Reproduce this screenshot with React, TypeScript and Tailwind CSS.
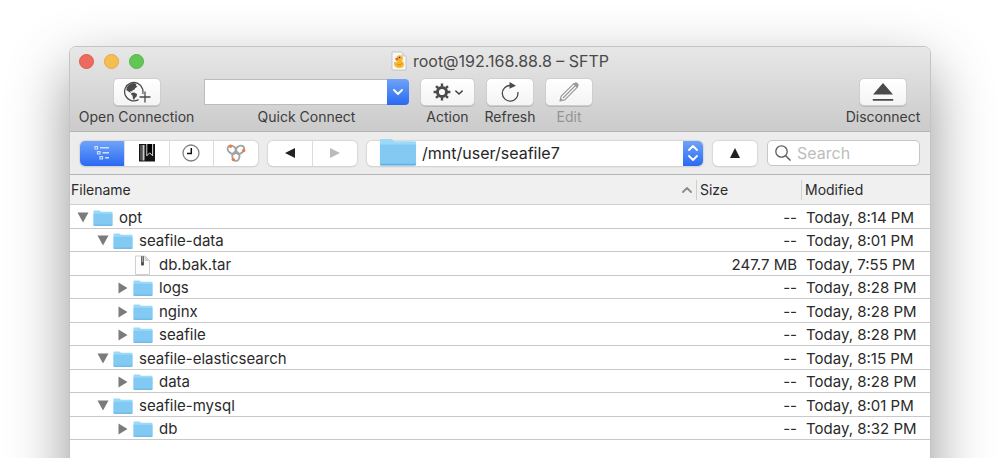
import React, { useState } from 'react';
import clsx from 'clsx';

type Entry = {
  name: string;
  depth: number;
  kind: 'open' | 'closed' | 'file';
  size: string;
  modified: string;
};

const entries: Entry[] = [
  { name: 'opt', depth: 0, kind: 'open', size: '--', modified: 'Today, 8:14 PM' },
  { name: 'seafile-data', depth: 1, kind: 'open', size: '--', modified: 'Today, 8:01 PM' },
  { name: 'db.bak.tar', depth: 2, kind: 'file', size: '247.7 MB', modified: 'Today, 7:55 PM' },
  { name: 'logs', depth: 2, kind: 'closed', size: '--', modified: 'Today, 8:28 PM' },
  { name: 'nginx', depth: 2, kind: 'closed', size: '--', modified: 'Today, 8:28 PM' },
  { name: 'seafile', depth: 2, kind: 'closed', size: '--', modified: 'Today, 8:28 PM' },
  { name: 'seafile-elasticsearch', depth: 1, kind: 'open', size: '--', modified: 'Today, 8:15 PM' },
  { name: 'data', depth: 2, kind: 'closed', size: '--', modified: 'Today, 8:28 PM' },
  { name: 'seafile-mysql', depth: 1, kind: 'open', size: '--', modified: 'Today, 8:01 PM' },
  { name: 'db', depth: 2, kind: 'closed', size: '--', modified: 'Today, 8:32 PM' },
];

const indents = ['pl-[7px]', 'pl-[27px]', 'pl-[47px]'];

const FolderIcon = ({ className }: { className: string }) => (
  <svg viewBox="0 0 40 30" preserveAspectRatio="none" className={className} aria-hidden="true">
    <path d="M1 2.500Q1 1 2.500 1H13l3 2.500h21.500Q39 3.500 39 5v23H1z" fill="#9adaf8" />
    <path d="M1 7h38v21q0 1.500-1.500 1.500h-35Q1 29.500 1 28z" fill="#82c9f3" />
    <path d="M1 27.500h38v.5q0 1.500-1.500 1.500h-35Q1 29.500 1 28z" fill="#69b2dd" />
  </svg>
);

const ArchiveIcon = () => (
  <svg viewBox="0 0 20 20" className="h-5 w-5" aria-hidden="true">
    <path d="M2.500 1h9.500l4.500 4.500v14h-14z" fill="#fdfdfd" stroke="#c4c4c4" strokeWidth="0.800" />
    <path d="M12 1v4.500h4.500z" fill="#dcdcdc" stroke="#bdbdbd" strokeWidth="0.600" />
    <rect x="8" y="1" width="3" height="9.500" rx="0.600" fill="#6a6a6a" />
    <path d="M9.500 1.500v6" stroke="#dedede" strokeWidth="1" strokeDasharray="1 1" />
    <rect x="8.700" y="7.500" width="1.600" height="2.500" fill="#3f3f3f" />
  </svg>
);

const DuckIcon = () => (
  <svg viewBox="0 0 16 20" className="h-5 w-4" aria-hidden="true">
    <path d="M1 1h9.500L15 5.500v13.500H1z" fill="#f8f8f8" stroke="#bbb" strokeWidth="0.800" />
    <path d="M10.500 1v4.500H15z" fill="#d4d4d4" />
    <path
      d="M8.500 4.300c2 0 3.500 1.500 3.500 3.300 0 1-.4 1.700-1 2.300 1.200.8 2 2.100 2 3.500 0 2.200-2 3.600-4.800 3.600-3 0-5.200-1.500-5.200-4.200 0-.9.300-1.700.8-2.300.6.7 1.500 1 2.500.8-.8-.8-1.300-2-1.300-3.200 0-2.100 1.500-3.800 3.500-3.800z"
      fill="#f5b62f"
    />
    <path d="M4 7.600l3-.8.6 1.600-2.600 1z" fill="#e0651f" />
    <circle cx="8.600" cy="6.500" r="0.800" fill="#333" />
    <path d="M6 13c1.500 1.400 3.800 1 5-.8" fill="none" stroke="#d58b16" strokeWidth="1" />
  </svg>
);

const GlobePlusIcon = () => (
  <svg viewBox="0 0 28 22" className="h-[22px] w-7" aria-hidden="true">
    <path d="M19.600 8A9.200 9.200 0 1 0 15.500 18.600" fill="none" stroke="#4a4a4a" strokeWidth="1.300" />
    <path d="M19.600 8q.8 2.500.2 5" fill="none" stroke="#4a4a4a" strokeWidth="1.300" />
    <path
      d="M4 6.200C5.500 3.500 8 2.200 10.500 2l3 .8-.6 1.800 1.600.9-2.400 1.700-.6 1.600-1.700.2-.6 1.500-1.900-.4.700 2-2.600-1.500L3.200 9z"
      fill="#4a4a4a"
    />
    <path d="M8.300 12l2.800-.5 3 1.600-.5 2.400-1.700 1.500-.8 2.300-1.300-2.100-.2-2.400-1.500-1.400z" fill="#4a4a4a" />
    <path d="M22 10.500v11M16.500 16H27.500" stroke="#4a4a4a" strokeWidth="1.300" />
  </svg>
);

const GearIcon = () => (
  <svg viewBox="0 0 18 18" className="h-[18px] w-[18px]" aria-hidden="true">
    <circle cx="9" cy="9" r="4.600" fill="none" stroke="#4a4a4a" strokeWidth="3" />
    <g stroke="#4a4a4a" strokeWidth="2.400">
      <path d="M9 .6v3M9 14.400v3M.6 9h3M14.400 9h3M3.060 3.060l2.100 2.100M12.840 12.840l2.100 2.100M3.060 14.940l2.100-2.100M12.840 5.160l2.100-2.100" />
    </g>
  </svg>
);

const Chevron = ({ className }: { className: string }) => (
  <svg viewBox="0 0 10 6" className={className} fill="none" stroke="currentColor" aria-hidden="true">
    <path d="M1 1l4 4 4-4" strokeWidth="1.800" strokeLinecap="round" strokeLinejoin="round" />
  </svg>
);

const RefreshIcon = () => (
  <svg viewBox="0 0 20 22" className="h-[22px] w-5" aria-hidden="true">
    <path d="M10.500 4.500A7.800 7.800 0 1 0 17.800 11" fill="none" stroke="#4a4a4a" strokeWidth="1.300" />
    <path d="M9.500 1l6.500 3.700-6.500 3z" fill="#4a4a4a" />
  </svg>
);

const PencilIcon = () => (
  <svg viewBox="0 0 22 22" className="h-[22px] w-[22px]" aria-hidden="true">
    <path
      d="M2 20l1.200-4.800L15.800 2.600l3.600 3.600L6.800 18.800zM5 17L17 5"
      fill="none"
      stroke="#9a9a9a"
      strokeWidth="1.200"
      strokeLinejoin="round"
    />
    <path d="M15.200 3.200l1.500-1.500q1.300-1 2.700.3l.8.800q1.100 1.400 0 2.700l-1.400 1.300zM2 20l.8-3 2.200 2.200z" fill="#9a9a9a" />
  </svg>
);

const EjectIcon = () => (
  <svg viewBox="0 0 22 20" className="h-5 w-[22px]" aria-hidden="true">
    <path d="M11 1l10 11.500H1zM.8 17h20.400v1.800H.8z" fill="#4a4a4a" />
  </svg>
);

const OutlineIcon = () => (
  <svg viewBox="0 0 16 16" className="h-4 w-4" fill="none" stroke="#cfdffd" aria-hidden="true">
    <path d="M1 1.500h2.500V4H1zM3.500 6.500H6V9H3.500zM6 11.500h2.500V14H6z" strokeWidth="1.200" />
    <path d="M6 2.700h9M8.500 7.700H15M11 12.700h4" strokeWidth="1.600" />
  </svg>
);

const BookmarkIcon = () => (
  <svg viewBox="0 0 16 18" className="h-[18px] w-4" aria-hidden="true">
    <path d="M0 0h16v17.500H0z" fill="#151515" />
    <path d="M1.500 1h1v15.500h-1z" fill="#8a8a8a" />
    <path d="M3.500 1h2v15.500h-2z" fill="#c9c9c9" />
    <path d="M7.800 0v11.800l2.900-3 2.900 3V0" fill="#000" stroke="#f2f2f2" strokeWidth="0.900" />
  </svg>
);

const ClockIcon = () => (
  <svg viewBox="0 0 18 18" className="h-[18px] w-[18px]" fill="none" aria-hidden="true">
    <circle cx="9" cy="9" r="8" fill="#fff" stroke="#808080" strokeWidth="1.300" />
    <path d="M9.300 4v5.500H5" stroke="#111" strokeWidth="1.500" />
  </svg>
);

const BonjourIcon = () => (
  <svg viewBox="0 0 20 18" className="h-[18px] w-5" fill="none" aria-hidden="true">
    <g stroke="#a3a3a3" strokeWidth="1.900">
      <ellipse cx="6" cy="5.800" rx="4.800" ry="3.600" transform="rotate(40 6 5.800)" />
      <ellipse cx="13.800" cy="5.800" rx="4.800" ry="3.600" transform="rotate(-40 13.800 5.800)" />
      <ellipse cx="9.900" cy="12.300" rx="3.600" ry="4.600" />
    </g>
    <circle cx="4.500" cy="2.200" r="1.700" fill="#ee7d3b" />
    <circle cx="17.700" cy="6.500" r="1.700" fill="#ee7d3b" />
    <circle cx="7.300" cy="15.600" r="1.700" fill="#ee7d3b" />
  </svg>
);

const ToolButton = ({
  label,
  itemClass,
  boxClass,
  disabled,
  children,
}: {
  label: string;
  itemClass: string;
  boxClass: string;
  disabled?: boolean;
  children: React.ReactNode;
}) => (
  <button
    disabled={disabled}
    className={clsx('flex shrink-0 flex-col items-center', itemClass, disabled ? 'text-[#949494]' : 'text-[#3c3c3c]')}
  >
    <span
      className={clsx(
        'flex h-7 items-center justify-center gap-1 rounded-[5px] border border-[#cecece] bg-linear-to-b from-white to-[#f4f4f4] shadow-[0_1px_0_#b8b8b8]',
        boxClass,
      )}
    >
      {children}
    </span>
    <span className="mt-px text-sm leading-5 whitespace-nowrap">{label}</span>
  </button>
);

const TitleBar = () => (
  <div className="grid h-7 grid-cols-[1fr_auto_1fr] items-center px-[9px]">
    <div className="flex gap-[10px]">
      <button aria-label="Close" className="size-[15px] rounded-full border border-[#de5a50] bg-[#ed6a5f]" />
      <button aria-label="Minimize" className="size-[15px] rounded-full border border-[#e0aa42] bg-[#f6be50]" />
      <button aria-label="Zoom" className="size-[15px] rounded-full border border-[#55b549] bg-[#62c655]" />
    </div>
    <h1 className="flex items-center gap-[6px] text-base leading-5 text-[#4a4a4a]">
      <DuckIcon />
      root@192.168.88.8 – SFTP
    </h1>
  </div>
);

const Toolbar = () => (
  <div className="flex items-start gap-[11px] px-[10px] pt-[3px] pb-1">
    <ToolButton label="Open Connection" itemClass="w-[113px]" boxClass="w-12">
      <GlobePlusIcon />
    </ToolButton>
    <div className="flex w-[205px] shrink-0 flex-col items-center pt-px">
      <div className="flex h-[26px] w-full">
        <input
          id="quick-connect"
          type="text"
          className="min-w-0 flex-1 border border-r-0 border-[#bcbcbc] bg-white px-2 text-sm outline-none"
        />
        <button
          aria-label="Show recent connections"
          className="flex w-[22px] items-center justify-center rounded-r-[4px] bg-linear-to-b from-[#6fa3f7] to-[#2a68f3] text-white"
        >
          <Chevron className="h-[6px] w-[10px]" />
        </button>
      </div>
      <label htmlFor="quick-connect" className="mt-[2px] text-sm leading-5 text-[#3c3c3c]">
        Quick Connect
      </label>
    </div>
    <ToolButton label="Action" itemClass="w-[55px]" boxClass="w-[55px]">
      <GearIcon />
      <Chevron className="h-[5px] w-2" />
    </ToolButton>
    <ToolButton label="Refresh" itemClass="w-12" boxClass="w-12">
      <RefreshIcon />
    </ToolButton>
    <ToolButton label="Edit" itemClass="w-12" boxClass="w-12" disabled>
      <PencilIcon />
    </ToolButton>
    <ToolButton label="Disconnect" itemClass="ml-auto w-[74px]" boxClass="w-12">
      <EjectIcon />
    </ToolButton>
  </div>
);

const views = [
  { name: 'Browser', icon: <OutlineIcon /> },
  { name: 'Bookmarks', icon: <BookmarkIcon /> },
  { name: 'History', icon: <ClockIcon /> },
  { name: 'Bonjour', icon: <BonjourIcon /> },
];

const PathBar = () => {
  const [view, setView] = useState('Browser');

  return (
    <div className="flex h-[43px] items-center gap-[10px] border-b border-[#b4b4b4] bg-[#ececec] px-[10px]">
      <div className="flex h-[25px] w-[178px] shrink-0 overflow-hidden rounded-[5px] bg-white shadow-[0_0_1px_1px_#d8d8d8,0_1px_1px_#b4b4b4]">
        {views.map(({ name, icon }) => (
          <button
            key={name}
            aria-label={name}
            aria-pressed={view === name}
            onClick={() => setView(name)}
            className={clsx(
              'flex flex-1 items-center justify-center border-r border-[#dcdcdc] last:border-r-0',
              view === name && 'bg-linear-to-b from-[#6fa3f7] to-[#2a68f3]',
            )}
          >
            {icon}
          </button>
        ))}
      </div>

      <div className="flex h-[25px] w-[89px] shrink-0 rounded-[5px] bg-white shadow-[0_0_1px_1px_#d8d8d8,0_1px_1px_#b4b4b4]">
        <button aria-label="Back" className="flex flex-1 items-center justify-center border-r border-[#dcdcdc]">
          <svg viewBox="0 0 10 10" className="size-[10px]" aria-hidden="true">
            <path d="M10 0v10L0 5z" fill="#222" />
          </svg>
        </button>
        <button aria-label="Forward" disabled className="flex flex-1 items-center justify-center">
          <svg viewBox="0 0 10 10" className="size-[10px]" aria-hidden="true">
            <path d="M0 0v10l10-5z" fill="#bababa" />
          </svg>
        </button>
      </div>

      <div className="flex h-[25px] min-w-0 flex-1 items-end rounded-[5px] bg-white pl-3 shadow-[0_0_1px_1px_#d8d8d8,0_1px_1px_#b4b4b4]">
        <FolderIcon className="h-7 w-[38px] shrink-0" />
        <select
          aria-label="Path"
          className="h-full min-w-0 flex-1 appearance-none bg-transparent pl-[5px] text-base text-[#262626] outline-none"
        >
          <option>/mnt/user/seafile7</option>
        </select>
        <span className="flex h-full w-5 shrink-0 flex-col items-center justify-center gap-1 rounded-r-[5px] bg-linear-to-b from-[#6fa3f7] to-[#2a68f3] text-white">
          <Chevron className="h-[6px] w-[10px] rotate-180" />
          <Chevron className="h-[6px] w-[10px]" />
        </span>
      </div>

      <button
        aria-label="Go to parent folder"
        className="flex h-[25px] w-11 shrink-0 items-center justify-center rounded-[5px] bg-white shadow-[0_0_1px_1px_#d8d8d8,0_1px_1px_#b4b4b4]"
      >
        <svg viewBox="0 0 10 10" className="size-[10px]" aria-hidden="true">
          <path d="M5 0l5 10H0z" fill="#222" />
        </svg>
      </button>

      <label className="flex h-[26px] w-[153px] shrink-0 items-center gap-[6px] rounded-[5px] border border-[#c6c6c6] bg-white pl-[7px]">
        <svg viewBox="0 0 16 16" className="size-4 shrink-0" fill="none" stroke="#5c5c5c" aria-hidden="true">
          <circle cx="6.500" cy="6.500" r="5.700" strokeWidth="1.300" />
          <path d="M10.700 10.700l4.800 4.800" strokeWidth="1.500" />
        </svg>
        <input
          type="search"
          aria-label="Search"
          placeholder="Search"
          className="min-w-0 flex-1 bg-transparent text-base leading-5 outline-none placeholder:text-[#bdbdbd]"
        />
      </label>
    </div>
  );
};

const FileTable = () => (
  <table className="w-full table-fixed border-separate border-spacing-0 text-[15px] leading-5 text-[#2a2a2a]">
    <colgroup>
      <col />
      <col className="w-[105px]" />
      <col className="w-[129px]" />
    </colgroup>
    <thead>
      <tr className="h-[30px] bg-[#f0f0f0] text-left text-sm [&>th]:border-b [&>th]:border-[#cfcfcf] [&>th]:p-0 [&>th]:font-normal">
        <th>
          <span className="flex items-center justify-between pr-1 pl-px">
            Filename
            <Chevron className="h-[6px] w-[10px] rotate-180 text-[#8c8c8c]" />
          </span>
        </th>
        <th>
          <span className="block border-l border-[#cfcfcf] pl-[3px]">Size</span>
        </th>
        <th>
          <span className="block border-l border-[#cfcfcf] pl-[3px]">Modified</span>
        </th>
      </tr>
    </thead>
    <tbody>
      {entries.map((entry) => (
        <tr
          key={entry.name}
          className="odd:h-6 even:h-[23px] [&>td]:border-b [&>td]:border-[#c9c9c9] [&>td]:p-0 [&>td]:pt-[2px] [&>td]:whitespace-nowrap"
        >
          <td>
            <div className={clsx('flex items-center', indents[entry.depth])}>
              {entry.kind === 'file' ? (
                <span className="w-3" />
              ) : (
                <button aria-label={entry.kind === 'open' ? `Collapse ${entry.name}` : `Expand ${entry.name}`} className="w-3">
                  <svg viewBox="0 0 12 12" className="size-3" fill="#7b7b7b" aria-hidden="true">
                    <path d={entry.kind === 'open' ? 'M.5 .5h11L6 10.500z' : 'M1.500 .5l9 5.500-9 5.500z'} />
                  </svg>
                </button>
              )}
              <span className="mr-[6px] ml-1">
                {entry.kind === 'file' ? <ArchiveIcon /> : <FolderIcon className="h-4 w-5" />}
              </span>
              {entry.name}
            </div>
          </td>
          <td className="text-right">
            <span className="pr-1">{entry.size}</span>
          </td>
          <td>
            <span className="pl-[5px]">{entry.modified}</span>
          </td>
        </tr>
      ))}
    </tbody>
  </table>
);

const App: React.FC = () => {
  return (
    <div className="flex min-h-screen flex-col overflow-hidden bg-white px-[69px] pt-[46px] font-['Inter',sans-serif]">
      <main className="-mb-24 flex-1 rounded-t-[7px] border border-[#c4c4c4] bg-white shadow-[0_24px_60px_rgba(0,0,0,0.42)]">
        <header className="rounded-t-[6px] border-b border-[#b4b4b4] bg-linear-to-b from-[#e7e7e7] to-[#cbcbcb]">
          <TitleBar />
          <Toolbar />
        </header>
        <PathBar />
        <FileTable />
      </main>
    </div>
  );
};

export default App;
